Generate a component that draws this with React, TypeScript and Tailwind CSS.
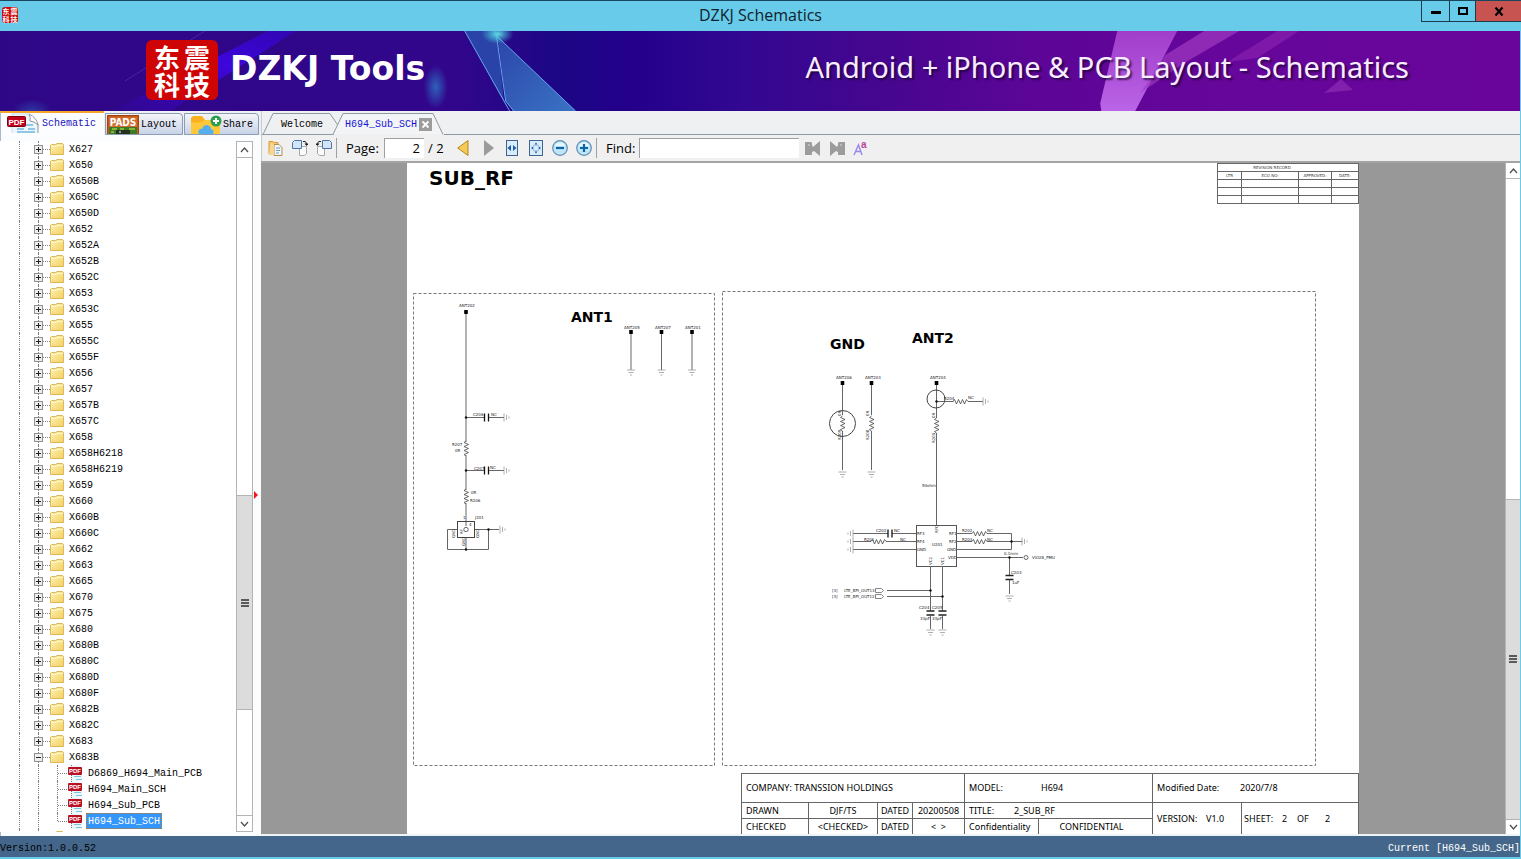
import React from "react";

const folders = [
  "X627", "X650", "X650B", "X650C", "X650D", "X652", "X652A", "X652B", "X652C", "X653",
  "X653C", "X655", "X655C", "X655F", "X656", "X657", "X657B", "X657C", "X658", "X658H6218",
  "X658H6219", "X659", "X660", "X660B", "X660C", "X662", "X663", "X665", "X670", "X675",
  "X680", "X680B", "X680C", "X680D", "X680F", "X682B", "X682C", "X683", "X683B",
];
const files = ["D6869_H694_Main_PCB", "H694_Main_SCH", "H694_Sub_PCB", "H694_Sub_SCH"];

const mono = "font-['Liberation_Mono','Noto_Sans_CJK_SC',monospace] text-[10px] leading-4";
const ui = "font-['Open_Sans','Noto_Sans',sans-serif]";

/* ---------- icons ---------- */

function FolderIcon() {
  return (
    <svg width="14" height="13" viewBox="0 0 14 13" className="shrink-0">
      <defs>
        <linearGradient id="fold" x1="0" y1="0" x2="1" y2="1">
          <stop offset="0" stopColor="#fff3b4" />
          <stop offset="1" stopColor="#f2cf63" />
        </linearGradient>
      </defs>
      <path d="M.5 11.500V2.500l1-1h4l1.500-1h5.500l1 1v10z" fill="url(#fold)" stroke="#dcb954" />
      <path d="M1 3.500h5.500l1-1H13" fill="none" stroke="#fff8d4" />
    </svg>
  );
}

function PdfSmall() {
  return (
    <svg width="16" height="16" viewBox="0 0 16 16" className="shrink-0">
      <path d="M4 0h7l4 3v13H4z" fill="#e9f7fc" />
      <path d="M7 11.500h7M9 14.500h6" stroke="#7cc3df" />
      <path d="M4.500 0v16" stroke="#777" strokeDasharray="1 1" />
      <rect x="1" y="2" width="14" height="8" rx="1" fill="#b80f22" />
      <text x="8" y="8" textAnchor="middle" fontSize="6" fontWeight="700" fill="#fff" fontFamily="Liberation Sans">PDF</text>
    </svg>
  );
}

function PdfTab() {
  return (
    <svg width="32" height="20" viewBox="0 0 32 20" className="shrink-0">
      <path d="M5 1h17l9 8v11H5z" fill="#edf6fc" />
      <path d="M5 20V1h17" fill="none" stroke="#c9dcea" />
      <path d="M22 1q2 4 1 7 4 0 8 4Q30 5 22 1z" fill="#fff" stroke="#8d98a2" />
      <path d="M31 11v9" stroke="#8d98a2" />
      <path d="M10 16h7M19 12h7M21 16h7M10 19h18" stroke="#8fc6e4" strokeWidth="2" />
      <rect x="0.500" y="3.500" width="18" height="10" rx="1" fill="#c4001c" stroke="#7d0010" />
      <text x="9.500" y="11.500" textAnchor="middle" fontSize="8" fontWeight="700" fill="#fff" fontFamily="Liberation Sans">PDF</text>
    </svg>
  );
}

function PadsTab() {
  return (
    <svg width="32" height="19" viewBox="0 0 32 19" className="shrink-0">
      <rect x=".5" y=".5" width="31" height="19" fill="#c65a1c" stroke="#a3430c" />
      <rect x="2" y="2" width="28" height="10" fill="#d26c2c" />
      <text x="16" y="11" textAnchor="middle" fontSize="10" fontWeight="700" fill="#fff" fontFamily="DejaVu Sans Condensed, DejaVu Sans">PADS</text>
      <rect x="2" y="12" width="28" height="7" fill="#3c7a28" />
      <path d="M5 14h5M13 14h4M22 14h6M4 17h3" stroke="#9ccc3c" strokeWidth="1.500" />
      <rect x="9" y="15" width="14" height="4" fill="#23301f" />
      <circle cx="13" cy="17" r="1.200" fill="#8a9a86" />
    </svg>
  );
}

function ShareTab() {
  return (
    <svg width="32" height="19" viewBox="0 0 32 19" className="shrink-0">
      <path d="M1 19V3l2-2h9l3 4h13l2 2v12z" fill="#fbb11e" />
      <path d="M1 7q8 2 14-2h13l2 2v12H1z" fill="#ffc83a" />
      <path d="M10 19q-3-1-1-4 1-2 3-1 1-4 5-4 4 1 4 4 4 1 2 5z" fill="#55aef0" />
      <circle cx="26" cy="6" r="5.500" fill="#2d9d4e" />
      <path d="M26 3v6M23 6h6" stroke="#fff" strokeWidth="2" />
    </svg>
  );
}

function OpenIcon() {
  return (
    <svg width="16" height="16" viewBox="0 0 16 16">
      <path d="M1 1.500h4l1 1h4V14H1z" fill="#f4c877" stroke="#d9993b" />
      <path d="M6 4.500h5l3 3v8H6z" fill="#eef5fb" stroke="#b38f4c" />
      <path d="M8 8h4M8 10.500h4M8 13h3" stroke="#6b9ccc" />
      <path d="M1 14l5 1.500V4.500L3 3z" fill="#f7d694" />
    </svg>
  );
}

function RotateIcon({ flip = false }: { flip?: boolean }) {
  return (
    <svg width="16" height="16" viewBox="0 0 16 16">
      <g transform={flip ? "matrix(-1 0 0 1 16 0)" : undefined}>
        <path d="M7.500 6.500h7v7l-2 2h-5z" fill="#fafafa" stroke="#a3aab0" />
        <path d="M.5 2.500l2-2h7v8h-9z" fill="#d3e6f7" stroke="#4a76a8" />
        <path d="M11 1.500h2q1.500.5 1.500 2.500" fill="none" stroke="#222" />
        <path d="M12.500 3.500h4l-2 2.500z" fill="#222" />
      </g>
    </svg>
  );
}

function Prev() {
  return (
    <svg width="12" height="16" viewBox="0 0 12 16">
      <path d="M11 .5v15L.700 8z" fill="#f3cc58" stroke="#b98318" />
    </svg>
  );
}

function Next() {
  return (
    <svg width="12" height="16" viewBox="0 0 12 16">
      <path d="M1 0v16l10-8z" fill="#9b9b9b" />
    </svg>
  );
}

function FitWidth() {
  return (
    <svg width="12" height="16" viewBox="0 0 12 16">
      <rect x=".5" y=".5" width="11" height="15" fill="#d8ebfa" stroke="#3e648f" />
      <path d="M5 5v6L1.500 8zM7 5v6l3.500-3z" fill="#1f5f9f" />
    </svg>
  );
}

function FitPage() {
  return (
    <svg width="14" height="16" viewBox="0 0 14 16">
      <rect x=".5" y=".5" width="13" height="15" fill="#d8ebfa" stroke="#3e648f" />
      <path d="M7 2.500l1.500 2h-3zM7 13.500l1.500-2h-3zM2 8l2-1.500v3zM12 8l-2-1.500v3z" fill="#1f5f9f" />
      <rect x="4.500" y="5.500" width="5" height="5" fill="none" stroke="#7ea5cc" strokeDasharray="1 1" />
    </svg>
  );
}

function ZoomIcon({ plus = false }: { plus?: boolean }) {
  return (
    <svg width="16" height="16" viewBox="0 0 16 16">
      <circle cx="8" cy="8" r="7.300" fill="#bfe6f8" stroke="#5d8db5" strokeWidth="1.200" />
      <path d="M2.500 6a6 6 0 0 1 11 0z" fill="#e6f6fd" />
      <path d={plus ? "M4 8h8M8 4v8" : "M4 8h8"} stroke="#11649f" strokeWidth="2.200" />
    </svg>
  );
}

function FindIcon({ next = false }: { next?: boolean }) {
  return (
    <svg width="16" height="16" viewBox="0 0 16 16">
      <g transform={next ? "matrix(-1 0 0 1 16 0)" : undefined} fill="#9c9c9c">
        <path d="M0 2h6l1 1v2l1 2 7-6v15l-6-5-2 1v3H0z" />
        <circle cx="4" cy="5" r=".8" fill="#e2e2e2" />
      </g>
    </svg>
  );
}

function CaseIcon() {
  return (
    <svg width="16" height="16" viewBox="0 0 16 16">
      <path d="M1 15L5.500 5l3.500 10M3 11.500h5" fill="none" stroke="#9a86ee" strokeWidth="1.400" />
      <text x="8" y="8" fontSize="10" fontWeight="700" fill="#b8439c" fontFamily="Liberation Sans">a</text>
    </svg>
  );
}

function Chevron({ up = false }: { up?: boolean }) {
  return (
    <svg width="9" height="6" viewBox="0 0 9 6">
      <path d={up ? "M1 5l3.500-4L8 5" : "M1 1l3.500 4L8 1"} fill="none" stroke="#505050" strokeWidth="1.300" />
    </svg>
  );
}

function Grip() {
  return (
    <svg width="8" height="8" viewBox="0 0 8 8">
      <path d="M0 1h8M0 4h8M0 7h8" stroke="#5a5a5a" strokeWidth="2" />
    </svg>
  );
}

/* ---------- window chrome ---------- */

function TitleBar() {
  return (
    <header className="relative flex h-[31px] shrink-0 items-start justify-between border-t border-[#17465e] bg-[#67cbe9]">
      <div className="ml-[2px] mt-[6px] grid size-4 grid-cols-2 place-items-center rounded-[3px] bg-[#cc0a0a] font-['Noto_Sans_CJK_SC',sans-serif] text-[7px] leading-[7px] font-bold text-white">
        <span>东</span><span>震</span><span>科</span><span>技</span>
      </div>
      <h1 className={`${ui} absolute inset-x-0 top-1 text-center text-[16px] leading-5 text-[#10222c]`}>DZKJ Schematics</h1>
      <div className="relative flex h-[21px] border-b border-l border-[#1c3a48]">
        <button aria-label="Minimize" className="flex w-[28px] items-center justify-center border-r border-[#1c3a48]">
          <svg width="10" height="10"><path d="M0 6.500h10" stroke="#000" strokeWidth="3" /></svg>
        </button>
        <button aria-label="Maximize" className="flex w-[26px] items-center justify-center border-r border-[#1c3a48]">
          <svg width="10" height="8"><rect x="1" y="1" width="8" height="6" fill="none" stroke="#000" strokeWidth="2" /></svg>
        </button>
        <button aria-label="Close" className="flex w-[45px] items-center justify-center bg-[#c75450]">
          <svg width="10" height="9"><path d="M1.500 0.500l7 8M8.500 .5l-7 8" stroke="#000" strokeWidth="2.200" /></svg>
        </button>
      </div>
    </header>
  );
}

function Banner() {
  return (
    <div className="relative flex h-20 shrink-0 items-center justify-between overflow-hidden bg-[linear-gradient(90deg,#2e0787_0%,#31068b_30%,#1b0785_37%,#23008a_41%,#300791_48%,#46068f_58%,#5c0597_68%,#66069a_80%,#69059b_100%)] pl-[146px] pr-[111px]">
      <svg className="absolute inset-0 size-full" viewBox="0 0 1521 80" preserveAspectRatio="none">
        <defs>
          <linearGradient id="teal" x1="0" y1="0" x2="1" y2="1">
            <stop offset="0" stopColor="#2c50b0" />
            <stop offset="1" stopColor="#3f86cf" />
          </linearGradient>
          <linearGradient id="pink" x1="0" y1="0" x2="0" y2="1">
            <stop offset="0" stopColor="#a843cf" />
            <stop offset="1" stopColor="#c46ff0" />
          </linearGradient>
          <linearGradient id="beam" x1="1" y1="0" x2="0" y2="1">
            <stop offset="0" stopColor="#3405d8" stopOpacity=".5" />
            <stop offset=".4" stopColor="#3d06dc" />
            <stop offset="1" stopColor="#3a06c4" stopOpacity=".1" />
          </linearGradient>
          <radialGradient id="glow">
            <stop offset="0" stopColor="#2e6cc0" stopOpacity=".9" />
            <stop offset="1" stopColor="#2e6cc0" stopOpacity="0" />
          </radialGradient>
          <radialGradient id="spark">
            <stop offset="0" stopColor="#5fe0e8" />
            <stop offset="1" stopColor="#43c9dc" stopOpacity="0" />
          </radialGradient>
        </defs>
        <path d="M268 0h28L170 80h-58z" fill="url(#beam)" />
        <path d="M205 0L125 50" stroke="#5d35b8" opacity=".6" />
        <ellipse cx="436" cy="56" rx="12" ry="22" fill="url(#glow)" />
        <ellipse cx="32" cy="82" rx="20" ry="14" fill="url(#glow)" opacity=".6" />
        <path d="M465 0h31l2 8 6 60 4 10z" fill="#2a4fae" opacity=".85" />
        <path d="M498 6l78 74h-62l-8-10z" fill="url(#teal)" opacity=".85" />
        <path d="M465 0l45 80M496 4l80 76M497 6l9 64 8 10" fill="none" stroke="#66a5ee" />
        <ellipse cx="498" cy="3" rx="16" ry="10" fill="url(#spark)" />
        <path d="M1118 0h60l-42 80h-34l-1-8z" fill="url(#pink)" opacity=".9" />
        <path d="M1205 0h35l-55 32-44 30 25-38z" fill="#a53dc4" opacity=".65" />
        <path d="M1278 0h22l-42 27-30 4z" fill="#8d25b4" opacity=".6" />
        <path d="M1342 48l12 11-29 3z" fill="#8b2cb4" opacity=".7" />
      </svg>
      <div className="relative flex items-center gap-3">
        <div className="mb-0.5 grid h-[60px] w-[72px] grid-cols-2 place-content-center justify-items-center gap-y-px rounded-md bg-[#cf0505] px-[6px] font-['Noto_Sans_CJK_SC',sans-serif] text-[26px] leading-[26px] font-bold text-white">
          <span>东</span><span>震</span><span>科</span><span>技</span>
        </div>
        <div className="pb-1 font-['DejaVu_Sans',sans-serif] text-[33px] leading-10 font-bold text-white">DZKJ Tools</div>
      </div>
      <div className="relative pb-2 font-['Noto_Sans',sans-serif] text-[29px] leading-8 text-[#f8ecff] [text-shadow:2px_2px_2px_rgba(20,0,40,0.7)]">
        Android + iPhone &amp; PCB Layout - Schematics
      </div>
    </div>
  );
}

/* ---------- left panel ---------- */

function SideTabs() {
  return (
    <div role="tablist" className={`${mono} flex h-6 shrink-0 items-end bg-[#eef0f4] text-black`}>
      <button role="tab" aria-selected className="flex h-6 w-[104px] items-start gap-1 border-t-2 border-l border-[#f3a52c] border-l-[#a9b9c9] bg-[#fcfdff] pl-[6px] text-[#1a10c0]">
        <PdfTab />
        <span className="-ml-px pt-[3px]">Schematic</span>
      </button>
      <button role="tab" aria-selected={false} className="ml-px flex h-[22px] w-[78px] items-start gap-[2px] overflow-hidden rounded-tr border border-[#8b9cb5] bg-gradient-to-b from-[#f3f5f8] to-[#c9d3e8] pt-px pl-px">
        <PadsTab />
        <span className="pt-[2px]">Layout</span>
      </button>
      <button role="tab" aria-selected={false} className="ml-px flex h-[22px] w-[75px] items-start gap-[1px] overflow-hidden rounded-tr border border-[#8b9cb5] bg-gradient-to-b from-[#f3f5f8] to-[#c9d3e8] pt-px pl-[5px]">
        <ShareTab />
        <span className="pt-[2px]">Share</span>
      </button>
    </div>
  );
}

function Toggle({ open }: { open: boolean }) {
  return (
    <svg width="9" height="9" viewBox="0 0 9 9" className="shrink-0">
      <rect x=".5" y=".5" width="8" height="8" fill="#eceef0" stroke="#919191" />
      <path d={open ? "M2 4.500h5" : "M2 4.500h5M4.500 2v5"} stroke="#222" />
    </svg>
  );
}

function TreeItem({ name, open }: { name: string; open: boolean }) {
  return (
    <li>
      <button className="flex h-4 items-center whitespace-pre">
        <span className="mr-[14px] ml-[19px] h-4 border-l border-dotted border-[#808080]" />
        <span className="flex h-4 w-[9px] flex-col items-center">
          <span className="h-1 border-l border-dotted border-[#808080]" />
          <Toggle open={open} />
          <span className="h-[3px] border-l border-dotted border-[#808080]" />
        </span>
        <span className="w-[7px] border-t border-dotted border-[#808080]" />
        <FolderIcon />
        <span className="pt-0.5 pl-[5px]">{name}</span>
      </button>
    </li>
  );
}

function Tree() {
  return (
    <ul className={`${mono} min-w-0 flex-1 overflow-hidden text-black`}>
      {folders.map((f) => (
        <TreeItem key={f} name={f} open={f === "X683B"} />
      ))}
      {files.map((f, i) => (
        <li key={f}>
          <button className="flex h-4 items-center">
            <span className="mr-[18px] ml-[19px] h-4 border-l border-dotted border-[#808080]" />
            <span className="mr-[18px] h-4 border-l border-dotted border-[#808080]" />
            <span className={i === 3 ? "mb-2 h-2 border-l border-dotted border-[#808080]" : "h-4 border-l border-dotted border-[#808080]"} />
            <span className="w-[9px] border-t border-dotted border-[#808080]" />
            <PdfSmall />
            <span className={i === 3 ? "ml-[3px] h-4 border border-dotted border-[#c87a1a] bg-[#3296fa] px-px leading-4 text-white" : "ml-1 px-px pt-0.5"}>{f}</span>
          </button>
        </li>
      ))}
      <TreeItem name="" open={false} />
    </ul>
  );
}

function SidePanel() {
  return (
    <aside className="flex w-[261px] shrink-0 flex-col">
      <SideTabs />
      <div className="flex min-h-0 flex-1 border-l border-[#a9b9c9] bg-[#fbfcfe] pt-[6px] pb-1">
        <div className="-ml-px flex min-w-0 flex-1 bg-white">
          <Tree />
          <div className="flex w-[17px] shrink-0 flex-col border-x border-[#b4b4b4] bg-white">
            <button aria-label="Scroll up" className="flex h-[17px] items-center justify-center border-y border-[#b4b4b4]"><Chevron up /></button>
            <div className="flex-[338]" />
            <div className="flex flex-[214] items-center justify-center border-y border-[#b4b4b4] bg-[#dcdcdc]"><Grip /></div>
            <div className="flex-[105]" />
            <button aria-label="Scroll down" className="flex h-[17px] items-center justify-center border-y border-[#b4b4b4]"><Chevron /></button>
          </div>
        </div>
        <div className="flex w-2 items-center pt-4">
          <svg width="5" height="8" viewBox="0 0 5 8"><path d="M1 0v8l4-4z" fill="#f01818" /></svg>
        </div>
      </div>
    </aside>
  );
}

/* ---------- document area ---------- */

function DocTabs() {
  return (
    <div role="tablist" className={`${mono} flex h-6 shrink-0 items-end border-l border-[#c4ccd2] bg-[#eff0f1]`}>
      <button role="tab" aria-selected={false} className="relative h-[22px] w-[74px] border-b border-[#8c9aa5] pt-[2px] pl-[6px] text-black">
        <svg className="absolute inset-0" width="78" height="22" viewBox="0 0 78 22"><path d="M1 21.500L11 .5H68l8 12" fill="none" stroke="#8c9aa5" /></svg>
        <span className="relative">Welcome</span>
      </button>
      <button role="tab" aria-selected className="relative flex h-[22px] w-[108px] items-start gap-[2px] pt-[4px] pl-[9px] text-[#1414d8]">
        <svg className="absolute inset-0 overflow-visible" width="108" height="22" viewBox="0 0 108 22"><path d="M-3 21.500L7 .5H97l10 21" fill="#f3f4f5" stroke="#8c9aa5" /><path d="M-2 21.500H106" stroke="#f0f0f0" /></svg>
        <span className="relative">H694_Sub_SCH</span>
        <svg className="relative mt-[1px]" width="13" height="13" viewBox="0 0 13 13"><rect width="13" height="13" fill="#9c9c9c" /><path d="M3.500 3.500l6 6M9.500 3.500l-6 6" stroke="#fff" strokeWidth="1.800" /></svg>
      </button>
      <div className="h-[22px] flex-1 border-b border-[#8c9aa5]" />
    </div>
  );
}

const sep = "h-5 w-px bg-[#a0a0a0]";

function Toolbar() {
  return (
    <div className={`${ui} flex h-[26px] shrink-0 items-center border-l border-[#c4ccd2] bg-[#f0f0f0] pl-[6px] text-[13px] leading-5 text-black`}>
      <div className="flex gap-2">
        <button aria-label="Open"><OpenIcon /></button>
        <button aria-label="Rotate right"><RotateIcon /></button>
        <button aria-label="Rotate left"><RotateIcon flip /></button>
      </div>
      <span className={`${sep} ml-1`} />
      <label htmlFor="page" className="w-[47px] pl-[9px]">Page:</label>
      <input id="page" defaultValue="2" className="h-5 w-10 border-t border-l border-[#a0a0a0] bg-white pr-1 pb-0.5 text-right" />
      <span className="w-[33px] pl-1 whitespace-pre">/ 2</span>
      <div className="flex gap-[14px]">
        <button aria-label="Previous page"><Prev /></button>
        <button aria-label="Next page"><Next /></button>
      </div>
      <div className="ml-[11px] flex gap-[11px]">
        <button aria-label="Fit width"><FitWidth /></button>
        <button aria-label="Fit page"><FitPage /></button>
        <div className="-ml-0.5 flex gap-2">
          <button aria-label="Zoom out"><ZoomIcon /></button>
          <button aria-label="Zoom in"><ZoomIcon plus /></button>
        </div>
      </div>
      <span className={`${sep} ml-1`} />
      <label htmlFor="find" className="w-[42px] pl-[9px]">Find:</label>
      <input id="find" className="h-5 w-[160px] border-t border-l border-[#a0a0a0] bg-white px-1" />
      <div className="ml-[6px] flex gap-2">
        <button aria-label="Find previous"><FindIcon /></button>
        <button aria-label="Find next"><FindIcon next /></button>
        <button aria-label="Match case"><CaseIcon /></button>
      </div>
    </div>
  );
}

/* ---------- schematic symbols ---------- */

const T = ({ x, y, children, r }: { x: number; y: number; children: string; r?: boolean }) => (
  <text x={x} y={y} transform={r ? `rotate(-90 ${x} ${y})` : undefined}>{children}</text>
);
const Line = ({ d }: { d: string }) => <path d={d} fill="none" stroke="#666" strokeWidth="1" />;
const GndDown = ({ x, y }: { x: number; y: number }) => (
  <path d={`M${x - 4} ${y}h8M${x - 2.5} ${y + 2.5}h5M${x - 1} ${y + 5}h2`} stroke="#999" strokeWidth="0.8" />
);
const GndSide = ({ x, y, s = 1 }: { x: number; y: number; s?: number }) => (
  <path d={`M${x} ${y - 4}v8M${x + 2.5 * s} ${y - 2.5}v5M${x + 5 * s} ${y - 1}v2`} stroke="#999" strokeWidth="0.8" />
);
const ResV = ({ x, y }: { x: number; y: number }) => (
  <path d={`M${x} ${y}l-2 1.500 4.500 2-4.500 2 4.500 2-4.500 2 4.500 2-4.500 2 2 1.500`} fill="none" stroke="#444" strokeWidth="0.8" />
);
const ResH = ({ x, y }: { x: number; y: number }) => (
  <path d={`M${x} ${y}l1.500-2 2 4.500 2-4.500 2 4.500 2-4.500 2 4.500 2-4.500 1.500 2`} fill="none" stroke="#444" strokeWidth="0.8" />
);
const CapH = ({ x, y }: { x: number; y: number }) => (
  <path d={`M${x} ${y - 4}v8M${x + 4} ${y - 4}v8`} stroke="#111" strokeWidth="1.3" />
);
const CapV = ({ x, y }: { x: number; y: number }) => (
  <path d={`M${x - 4} ${y}h8M${x - 4} ${y + 4}h8`} stroke="#222" strokeWidth="1.4" />
);
const Pin = ({ x, y }: { x: number; y: number }) => <rect x={x - 1.8} y={y} width="3.6" height="4" fill="#000" />;
const Dot = ({ x, y }: { x: number; y: number }) => <circle cx={x} cy={y} r="1.2" fill="#111" />;

function Schematic() {
  return (
    <svg viewBox="407 204 952 569" className="block w-full" fontFamily="DejaVu Sans, sans-serif">
      <g fill="none" stroke="#777" strokeDasharray="3 2">
        <rect x="413.500" y="293.500" width="301" height="472" />
        <rect x="722.500" y="291.500" width="593" height="474" />
      </g>
      <g fontSize="14" fontWeight="700" fill="#000">
        <text x="571" y="322">ANT1</text>
        <text x="830" y="349">GND</text>
        <text x="912" y="343">ANT2</text>
      </g>

      <Line d="M466 314v128M466 455v35M466 503v23M631 334v36M661.500 334v36M692 334v36" />
      <Line d="M466 417.500h18M489 417.500h15M466 470.500h18M489 470.500h15M474 529.500h25M488.500 529.500v20h-41v-20h10M466 538v11" />
      <Pin x={466} y={310} /><Pin x={631} y={330} /><Pin x={661.5} y={330} /><Pin x={692} y={330} />
      <GndDown x={631} y={370} /><GndDown x={661.5} y={370} /><GndDown x={692} y={370} />
      <CapH x={484.5} y={417.5} /><CapH x={484.5} y={470.5} />
      <GndSide x={504} y={417.5} /><GndSide x={504} y={470.5} /><GndSide x={500} y={529.5} />
      <ResV x={466} y={441} /><ResV x={466} y={489} />
      <Dot x={466} y={417.5} /><Dot x={466} y={470.5} /><Dot x={488.5} y={529.5} /><Dot x={466} y={549.5} />
      <rect x="457.500" y="521.500" width="17" height="16" fill="none" stroke="#444" />
      <circle cx="466" cy="529.500" r="2.200" fill="none" stroke="#444" strokeWidth=".8" />

      <Line d="M842.500 384v31M842.500 431v39M871.500 384v31M871.500 431v39M936.500 384v34M936.500 433v93M936.500 401.500h17M968 401.500h15" />
      <Pin x={842.5} y={381} /><Pin x={871.5} y={381} /><Pin x={936.5} y={381} />
      <ResV x={842.5} y={416} /><ResV x={871.5} y={416} /><ResV x={936.5} y={418} />
      <ResH x={953} y={401.5} />
      <GndDown x={842.5} y={472} /><GndDown x={871.5} y={472} /><GndSide x={983} y={401.5} />
      <circle cx="842.500" cy="423.500" r="13" fill="none" stroke="#444" />
      <circle cx="936" cy="399" r="9" fill="none" stroke="#444" />
      <Dot x={936.5} y={401.5} />

      <rect x="916.500" y="525.500" width="40" height="41" fill="none" stroke="#555" />
      <Line d="M853 533.500h35M892 533.500h24M853 541.500h18M886 541.500h30M853 549.500h63" />
      <Line d="M956 533.500h16M987 533.500h24.500v16H956M956 541.500h16M987 541.500h24M1011.500 541.500h11M956 557.500h67" />
      <Line d="M1009.500 557v18M1009.500 580v14M930.500 566v45M942.500 566v45M887 590.500h43M887 596.500h55M930.500 616v13M942.500 616v13" />
      <CapH x={888} y={533.5} /><ResH x={871} y={541.5} /><ResH x={972} y={533.5} /><ResH x={972} y={541.5} />
      <CapV x={1009.5} y={575.5} /><CapV x={930.5} y={611} /><CapV x={942.5} y={611} />
      <GndSide x={853} y={533.5} s={-1} /><GndSide x={853} y={541.5} s={-1} /><GndSide x={853} y={549.5} s={-1} />
      <GndSide x={1022} y={541.5} /><GndDown x={1009.5} y={596} /><GndDown x={930.5} y={630} /><GndDown x={942.5} y={630} />
      <Dot x={1011.5} y={541.5} /><Dot x={1009.5} y={557.5} /><Dot x={930.5} y={590.5} /><Dot x={942.5} y={596.5} />
      <circle cx="1026" cy="557.500" r="2" fill="#fff" stroke="#444" strokeWidth=".8" />
      <path d="M875.500 588.500h6l2 2-2 2h-6zM875.500 594.500h6l2 2-2 2h-6z" fill="none" stroke="#666" strokeWidth=".8" />

      <g fontSize="4" fill="#222">
        <T x={459} y={307}>ANT202</T><T x={624} y={329}>ANT205</T><T x={655} y={329}>ANT207</T><T x={685} y={329}>ANT201</T>
        <T x={473} y={416}>C206</T><T x={491} y={416}>NC</T><T x={452} y={446}>R207</T><T x={455} y={452}>0R</T>
        <T x={474} y={470}>C207</T><T x={490} y={469}>NC</T><T x={471} y={494}>0R</T><T x={470} y={502}>R206</T>
        <T x={475} y={519}>J201</T><T x={455} y={538} r>GND</T><T x={479} y={538} r>GND</T><T x={465} y={546} r>GND</T>
        <T x={463} y={519}>1</T><T x={469} y={526}>4</T><T x={463} y={534} r>RF</T>
        <T x={836} y={379}>ANT206</T><T x={865} y={379}>ANT203</T><T x={930} y={379}>ANT204</T>
        <T x={841} y={416} r>0R</T><T x={841} y={440} r>R209</T><T x={869} y={416} r>0R</T><T x={869} y={440} r>R208</T>
        <T x={935} y={418} r>0R</T><T x={935} y={443} r>R205</T><T x={944} y={400}>R204</T><T x={968} y={399}>NC</T>
        <T x={922} y={487}>50ohm</T>
        <T x={876} y={532}>C202</T><T x={894} y={532}>NC</T><T x={864} y={541}>R201</T><T x={900} y={541}>NC</T>
        <T x={917} y={535}>RF3</T><T x={917} y={543}>RF4</T><T x={917} y={551}>GND</T><T x={932} y={546}>U201</T>
        <T x={949} y={535}>RF1</T><T x={949} y={543}>RF2</T><T x={947} y={551}>GND</T><T x={948} y={559}>VDD</T>
        <T x={938} y={533} r>RFC</T><T x={932} y={565} r>VC2</T><T x={944} y={565} r>VC1</T>
        <T x={962} y={532}>R202</T><T x={987} y={532}>NC</T><T x={962} y={541}>R203</T><T x={987} y={541}>NC</T>
        <T x={1004} y={555}>0.1mm</T><T x={1032} y={559}>VIO28_PMU</T><T x={1011} y={574}>C203</T><T x={1012} y={584}>1uF</T>
        <T x={832} y={592}>[3]</T><T x={844} y={592}>LTE_BPI_OUT13</T><T x={832} y={598}>[3]</T><T x={844} y={598}>LTE_BPI_OUT12</T>
        <T x={919} y={609}>C204</T><T x={932} y={609}>C205</T><T x={920} y={620}>33pF</T><T x={932} y={620}>33pF</T>
      </g>
    </svg>
  );
}

const rev = "border border-[#666] h-2 p-0 text-center font-normal";
const cell = "border border-[#666] p-0 pl-1 font-normal";
const mid = "border border-[#666] p-0 text-center whitespace-pre";

function Sheet() {
  return (
    <div className="mx-auto w-[952px] bg-white font-['DejaVu_Sans',sans-serif] text-black">
      <div className="flex h-[41px] items-start justify-between">
        <h2 className="pl-[22px] text-[20px] leading-[30px] font-bold">SUB_RF</h2>
        <table className="w-[142px] table-fixed border-collapse text-[4px] leading-[6px] text-[#333]">
          <colgroup><col className="w-6" /><col className="w-[57px]" /><col className="w-[33px]" /><col /></colgroup>
          <tbody>
            <tr><th colSpan={4} className={`${rev} pr-8`}>REVISION RECORD</th></tr>
            <tr><th className={rev}>LTR</th><th className={rev}>ECO NO:</th><th className={rev}>APPROVED:</th><th className={rev}>DATE:</th></tr>
            {[0, 1, 2].map((i) => (
              <tr key={i}><td className={rev} /><td className={rev} /><td className={rev} /><td className={rev} /></tr>
            ))}
          </tbody>
        </table>
      </div>
      <Schematic />
      <table className="ml-auto w-[618px] table-fixed border-collapse font-['Noto_Sans',sans-serif] text-[9px] leading-[14px]">
        <colgroup>
          <col className="w-[67px]" /><col className="w-[69px]" /><col className="w-[35px]" /><col className="w-[52px]" />
          <col className="w-[74px]" /><col className="w-[114px]" /><col className="w-[89px]" /><col />
        </colgroup>
        <tbody>
          <tr className="h-[29px]">
            <td colSpan={4} className={cell}>COMPANY: TRANSSION HOLDINGS</td>
            <td colSpan={2} className={cell}><span className="inline-block w-[72px]">MODEL:</span>H694</td>
            <td colSpan={2} className={cell}><span className="inline-block w-[83px]">Modified Date:</span>2020/7/8</td>
          </tr>
          <tr className="h-4">
            <td className={cell}>DRAWN</td>
            <td className={mid}>DJF/TS</td>
            <td className={mid}>DATED</td>
            <td className={mid}>20200508</td>
            <td colSpan={2} className={cell}><span className="inline-block w-[45px]">TITLE:</span>2_SUB_RF</td>
            <td rowSpan={2} className={cell}><span className="inline-block w-[49px]">VERSION:</span>V1.0</td>
            <td rowSpan={2} className="border border-[#666] p-0 pl-[2px]">
              <span className="inline-block w-[38px]">SHEET:</span><span className="inline-block w-[15px]">2</span><span className="inline-block w-[28px]">OF</span>2
            </td>
          </tr>
          <tr className="h-[17px]">
            <td className={cell}>CHECKED</td>
            <td className={mid}>&lt;CHECKED&gt;</td>
            <td className={mid}>DATED</td>
            <td className={mid}>{"<  >"}</td>
            <td className={cell}>Confidentiality</td>
            <td className={`${mid} pr-2`}>CONFIDENTIAL</td>
          </tr>
        </tbody>
      </table>
    </div>
  );
}

function Viewer() {
  return (
    <div className="flex min-h-0 flex-1 border-t-2 border-b-2 border-[#a4a4a4] border-b-[#eef3f6] bg-[#989898]">
      <div className="min-w-0 flex-1 overflow-hidden"><Sheet /></div>
      <div className="flex w-[15px] shrink-0 flex-col border-l border-[#b4b4b4] bg-white">
        <button aria-label="Scroll up" className="flex h-4 items-center justify-center border-b border-[#b4b4b4]"><Chevron up /></button>
        <div className="flex-[320]" />
        <div className="flex flex-[320] items-center justify-center border-y border-[#b4b4b4] bg-[#dcdcdc]"><Grip /></div>
        <button aria-label="Scroll down" className="flex h-[14px] items-center justify-center"><Chevron /></button>
      </div>
    </div>
  );
}

export default function App() {
  return (
    <div className="flex h-screen flex-col overflow-hidden border-b-2 border-[#67cbe9] bg-[#f0f0f0]">
      <TitleBar />
      <div className="flex min-h-0 flex-1 flex-col border-r border-[#67cbe9]">
        <Banner />
        <div className="flex min-h-0 flex-1">
          <SidePanel />
          <main className="flex min-w-0 flex-1 flex-col">
            <DocTabs />
            <Toolbar />
            <Viewer />
          </main>
        </div>
        <footer className={`${mono} flex h-[21px] shrink-0 items-end justify-between bg-[#44668a]`}>
          <span className="text-black">Version:1.0.0.52</span>
          <span className="text-white">Current [H694_Sub_SCH]</span>
        </footer>
      </div>
    </div>
  );
}
